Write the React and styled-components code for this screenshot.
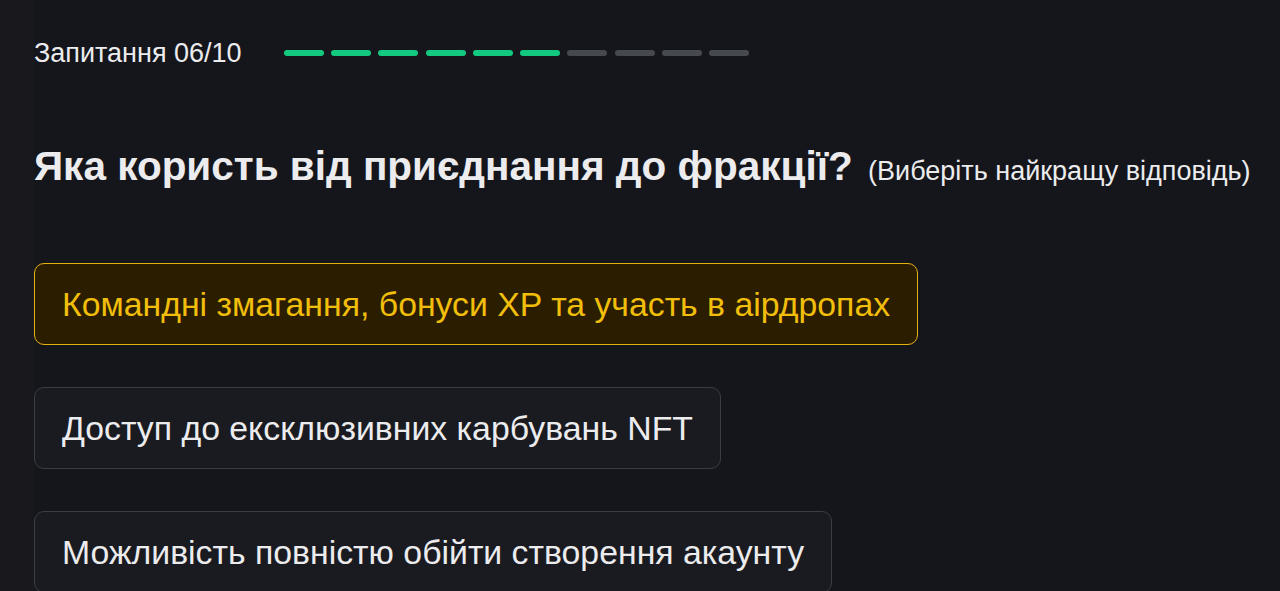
import styled, { createGlobalStyle } from "styled-components";

const GlobalStyle = createGlobalStyle`
  html, body {
    margin: 0;
    padding: 0;
    background: #15161b;
  }
  body {
    font-family: "Liberation Sans", Arial, sans-serif;
    -webkit-font-smoothing: antialiased;
  }
`;

const answers = [
  { text: "Командні змагання, бонуси XP та участь в аірдропах", selected: true },
  { text: "Доступ до ексклюзивних карбувань NFT" },
  { text: "Можливість повністю обійти створення акаунту" },
];

export default function App() {
  const current = 6;
  const total = 10;

  return (
    <>
      <GlobalStyle />
      <Page>
        <SideStrip />
        <Content>
          <ProgressRow>
            <Counter>Запитання 06/10</Counter>
            <Segments>
              {Array.from({ length: total }, (_, i) => (
                <Segment key={i} $done={i < current} />
              ))}
            </Segments>
          </ProgressRow>

          <Question>
            Яка користь від приєднання до фракції?{" "}
            <Hint>(Виберіть найкращу відповідь)</Hint>
          </Question>

          <AnswerList>
            {answers.map((a) => (
              <Answer key={a.text} $selected={a.selected}>
                {a.text}
              </Answer>
            ))}
          </AnswerList>
        </Content>
      </Page>
    </>
  );
}

const Page = styled.div`
  display: flex;
  height: 591px;
  overflow: hidden;
  background: #15161b;
`;

const SideStrip = styled.div`
  width: 34px;
  flex-shrink: 0;
  background: #19191d;
`;

const Content = styled.div`
  flex: 1;
  padding-top: 37px;
`;

const ProgressRow = styled.div`
  display: flex;
  align-items: center;
  gap: 42px;
`;

const Counter = styled.div`
  font-size: 27px;
  color: #ececee;
  line-height: 32px;
`;

const Segments = styled.div`
  display: flex;
  gap: 7.3px;
`;

const Segment = styled.div`
  width: 40px;
  height: 6px;
  border-radius: 3px;
  background: ${(p) => (p.$done ? "#12c97f" : "#464950")};
`;

const Question = styled.h1`
  margin: 73px 0 0;
  font-size: 40.5px;
  font-weight: 700;
  color: #ececee;
  line-height: 48px;
`;

const Hint = styled.span`
  margin-left: 4px;
  font-size: 27px;
  font-weight: 400;
  color: #ececee;
`;

const AnswerList = styled.div`
  margin-top: 68px;
  display: flex;
  flex-direction: column;
  align-items: flex-start;
  gap: 42px;
`;

const Answer = styled.button`
  font-family: inherit;
  font-size: 33.8px;
  line-height: 38px;
  padding: 21px 27px;
  border-radius: 10px;
  text-align: left;
  cursor: pointer;
  border: 1px solid ${(p) => (p.$selected ? "#e3b20d" : "#3b3e45")};
  background: ${(p) => (p.$selected ? "#2b1e00" : "#1a1b20")};
  color: ${(p) => (p.$selected ? "#f2be0c" : "#ececee")};
`;
